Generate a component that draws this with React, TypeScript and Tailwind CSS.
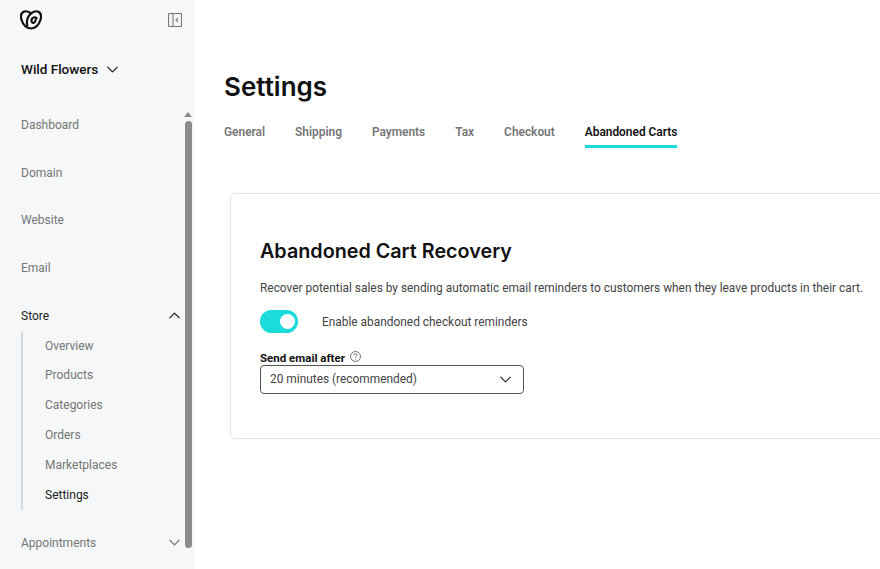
import { ChevronDown, ChevronUp } from "lucide-react";

const topItems = ["Dashboard", "Domain", "Website", "Email"];
const storeItems = ["Overview", "Products", "Categories", "Orders", "Marketplaces"];
const tabs = ["General", "Shipping", "Payments", "Tax", "Checkout"];

function Logo() {
  return (
    <svg width="22" height="20" viewBox="0 0 22 20" fill="none" stroke="#111" strokeWidth="2.200" strokeLinecap="round">
      <path d="M11 3.500C9 1.500 5.500.6 3.200 2 .8 3.500.6 7 1.600 10c1.200 4 4.600 8 9.400 8.500 4.800-.5 8.200-4.500 9.400-8.500 1-3 .8-6.500-1.600-8-3-1.700-7 .2-9.500 3.200-2 2.500-3 6-2 10" />
      <path d="M16.600 8.200c-1.900-1.500-4.600-.8-5.100 1.800-.4 2 1 3.200 2.500 2.700 1-.4 1.500-1.300 1.600-2.500" />
    </svg>
  );
}

export default function App() {
  return (
    <div className="flex h-[569px] w-[880px] overflow-hidden bg-white font-['Roboto',sans-serif]">
      <aside className="relative w-[194px] shrink-0 bg-[#f5f7f8] pl-[21px]">
        <div className="flex h-[40px] items-center justify-between pr-[12px]">
          <div className="-ml-[1px]">
            <Logo />
          </div>
          <svg width="14" height="14" viewBox="0 0 14 14" fill="none" stroke="#777" strokeWidth="1.100">
            <rect x="0.500" y="0.500" width="13" height="13" rx="1" />
            <path d="M5 .5v13M10 5 8 7l2 2" />
          </svg>
        </div>
        <div className="mt-[18px] flex h-[22px] items-center gap-[5px] text-[13.500px] font-medium text-[#111]">
          Wild Flowers
          <ChevronDown size={19} strokeWidth={1.600} className="text-[#222]" />
        </div>
        <nav className="mt-[21px] text-[12px] text-[#767676]">
          {topItems.map((item) => (
            <div key={item} className="flex h-[47.750px] items-center">
              {item}
            </div>
          ))}
          <div className="flex h-[47.750px] items-center justify-between pr-[10px] text-[#222]">
            Store
            <ChevronUp size={19} strokeWidth={1.600} className="text-[#222]" />
          </div>
          <div className="-mt-[9px] w-[150px] border-l-[2px] border-[#d4dbe0] pl-[22px]">
            {storeItems.map((item) => (
              <div key={item} className="flex h-[29.800px] items-center">
                {item}
              </div>
            ))}
            <div className="flex h-[29.800px] items-center text-[#222]">Settings</div>
          </div>
          <div className="mt-[9px] flex h-[48px] items-center justify-between pr-[10px]">
            Appointments
            <ChevronDown size={19} strokeWidth={1.600} className="text-[#767676]" />
          </div>
        </nav>
        <div className="absolute right-0 top-[108px] flex h-[440px] w-[12px] flex-col items-center bg-[#f5f7f8]">
          <div className="mt-[4px] h-0 w-0 border-x-[4px] border-b-[5px] border-x-transparent border-b-[#8a8a8a]" />
          <div className="mt-[4px] w-[7px] flex-1 rounded-full bg-[#8a8a8a]" />
        </div>
      </aside>
      <main className="min-w-0 flex-1 pl-[30px]">
        <h1 className="mt-[68px] font-['Inter',sans-serif] text-[26px] font-semibold leading-[38px] text-[#111]">Settings</h1>
        <div className="mt-[16px] flex gap-[30px] text-[11.900px] font-semibold text-[#767676]">
          {tabs.map((tab) => (
            <div key={tab} className="h-[26px] pt-[2px]">
              {tab}
            </div>
          ))}
          <div className="h-[26px] border-b-[3px] border-[#1bdbdb] pt-[2px] text-[#111]">Abandoned Carts</div>
        </div>
        <section className="ml-[6px] mt-[45px] h-[246px] w-[700px] rounded-l-[4px] border border-[#e4e7e9] pl-[29px] pt-[43px]">
          <h2 className="font-['Inter',sans-serif] text-[19.750px] font-semibold leading-[28px] text-[#111]">Abandoned Cart Recovery</h2>
          <p className="mt-[14px] whitespace-nowrap text-[11.900px] leading-[18px] text-[#444]">
            Recover potential sales by sending automatic email reminders to customers when they leave products in their cart.
          </p>
          <div className="mt-[12px] flex h-[24px] items-center gap-[24px]">
            <div className="flex h-[23px] w-[38px] items-center justify-end rounded-full bg-[#1bdbdb] pr-[3px]">
              <div className="h-[15px] w-[15px] rounded-full bg-white" />
            </div>
            <span className="pt-[3px] text-[11.900px] text-[#444]">Enable abandoned checkout reminders</span>
          </div>
          <div className="mt-[18px] flex h-[16px] items-center gap-[5px] text-[11.500px] font-bold text-[#111]">
            Send email after
            <svg width="11" height="11" viewBox="0 0 10 10" fill="none" stroke="#444" strokeWidth="0.700" className="-mt-[5px]">
              <circle cx="5" cy="5" r="4.500" />
              <path d="M3.600 3.900c0-1.800 2.800-1.800 2.800 0 0 1-1.400 1-1.400 2.200M5 7v.7" />
            </svg>
          </div>
          <div className="-mt-[2px] flex h-[29px] w-[264px] items-center justify-between rounded-[4px] border border-[#555] pl-[9px] pr-[8px] text-[11.900px] text-[#444]">
            <span className="pt-[1px]">20 minutes (recommended)</span>
            <ChevronDown size={19} strokeWidth={1.600} className="text-[#333]" />
          </div>
        </section>
      </main>
    </div>
  );
}
